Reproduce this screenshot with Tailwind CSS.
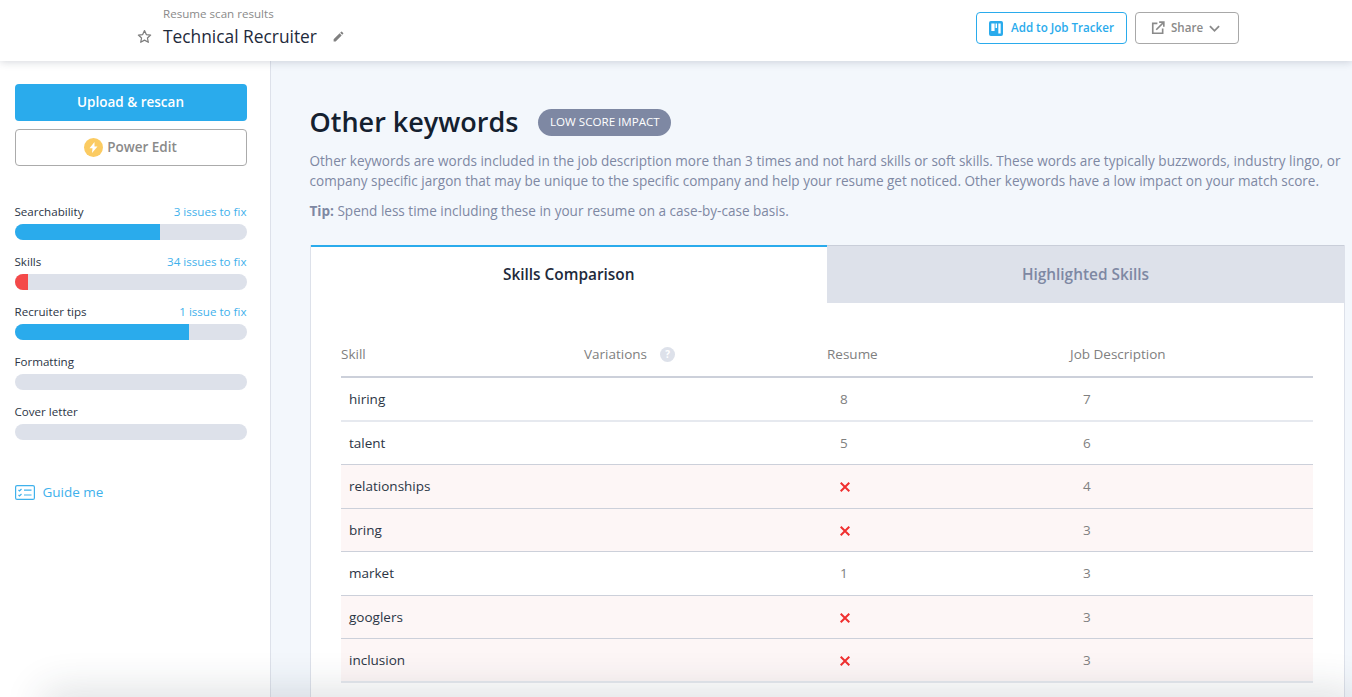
<!DOCTYPE html>
<html lang="en">
<head>
  <title>Resume scan results</title>
  <script src="https://cdn.jsdelivr.net/npm/@tailwindcss/browser@4"></script>
</head>
<body class="h-screen overflow-hidden bg-white font-['Open_Sans',sans-serif] text-[#1e2a3b]">
  <div class="relative flex flex-col h-[697px] overflow-hidden">
    <!-- Header -->
    <header class="relative z-10 flex h-[61px] shrink-0 items-center bg-white pb-[5px] shadow-[0_1px_8px_rgba(60,70,90,0.22)]">
      <div class="flex w-[976px] shrink-0 pl-[137px]">
        <svg class="mt-[22px] h-[15px] w-[15px] text-[#7d7d7d]" viewBox="0 0 24 24" fill="none" stroke="currentColor" stroke-width="2" stroke-linejoin="round"><path d="M12 2.5l2.9 6.4 6.9.8-5.1 4.7 1.4 6.9-6.1-3.5-6.1 3.5 1.4-6.9-5.1-4.7 6.9-.8z"/></svg>
        <div class="ml-[11px]">
          <p class="-mt-[1px] text-[11.6px] leading-[16px] text-[#8a8a8a]">Resume scan results</p>
          <div class="mt-[1px] flex items-center">
            <h1 class="text-[17.35px] leading-[26px] text-[#1e2a3b]">Technical Recruiter</h1>
            <svg class="ml-[15px] h-[13px] w-[13px] text-[#808080]" viewBox="0 0 24 24" fill="currentColor"><path d="M3 17.25V21h3.75L17.81 9.94l-3.75-3.75L3 17.25zM20.71 7.04a1 1 0 0 0 0-1.41l-2.34-2.34a1 1 0 0 0-1.41 0l-1.83 1.83 3.75 3.75 1.83-1.83z"/></svg>
          </div>
        </div>
      </div>
      <button class="flex h-[32px] w-[151px] items-center rounded-[4px] border border-[#2aabec] pl-[12px] text-[11.6px] font-semibold text-[#2aabec]">
        <svg class="mr-[8px] h-[15px] w-[14px]" viewBox="0 0 15 15" preserveAspectRatio="none"><rect width="15" height="15" rx="2" fill="#2aabec"/><rect x="2.5" y="2.5" width="3.5" height="7.5" fill="#fff"/><rect x="7" y="2.5" width="1.6" height="4.5" fill="#fff"/><rect x="10" y="2.5" width="2.5" height="10" fill="#fff"/></svg>
        Add to Job Tracker
      </button>
      <button class="ml-2 flex h-[32px] w-[104px] items-center rounded-[4px] border border-[#a8a8a8] pl-[15px] text-[11.6px] font-semibold text-[#8a8a8a]">
        <svg class="mr-[6px] h-[14px] w-[14px]" viewBox="0 0 24 24" fill="none" stroke="currentColor" stroke-width="2.8"><path d="M11 4H3v17h17v-8"/><path d="M9 15L22 2M14 2h8v8"/></svg>
        Share
        <svg class="ml-[6px] h-[9px] w-[11px]" viewBox="0 0 12 9" fill="none" stroke="currentColor" stroke-width="2"><path d="M1 2l5 5 5-5"/></svg>
      </button>
    </header>

    <div class="flex min-h-0 flex-1">
      <!-- Sidebar -->
      <aside class="w-[271px] shrink-0 border-r border-[#dde1ea] bg-white pl-[14.5px] pt-[23px]">
        <div class="w-[232px]">
          <button class="flex h-[37px] w-full items-center justify-center rounded-[4px] bg-[#2aabec] pb-[1px] text-[13.5px] font-semibold text-white">Upload &amp; rescan</button>
          <button class="mt-2 flex h-[37px] w-full items-center justify-center rounded-[4px] border border-[#ababab] pb-[1px] text-[13.5px] font-semibold text-[#8a8a8a]">
            <span class="mr-[4px] flex h-[19px] w-[19px] items-center justify-center rounded-full bg-[#fbcb62]">
              <svg class="h-[11px] w-[9px]" viewBox="0 0 9 11" fill="#fff"><path d="M5.5 0L0.5 6.3h3L3 11l5.5-6.5h-3z"/></svg>
            </span>
            Power Edit
          </button>

          <div class="mt-[36px] flex flex-col gap-[12px]">
            <div>
              <div class="flex h-[20px] items-center justify-between text-[11.6px]"><span class="text-[#2b3545]">Searchability</span><span class="text-[#3fb1ec]">3 issues to fix</span></div>
              <div class="mt-[2px] h-[16px] overflow-hidden rounded-full bg-[#dde1ea]"><div class="h-full w-[145px] bg-[#2aabec]"></div></div>
            </div>
            <div>
              <div class="flex h-[20px] items-center justify-between text-[11.6px]"><span class="text-[#2b3545]">Skills</span><span class="text-[#3fb1ec]">34 issues to fix</span></div>
              <div class="mt-[2px] h-[16px] overflow-hidden rounded-full bg-[#dde1ea]"><div class="h-full w-[13px] bg-[#f44949]"></div></div>
            </div>
            <div>
              <div class="flex h-[20px] items-center justify-between text-[11.6px]"><span class="text-[#2b3545]">Recruiter tips</span><span class="text-[#3fb1ec]">1 issue to fix</span></div>
              <div class="mt-[2px] h-[16px] overflow-hidden rounded-full bg-[#dde1ea]"><div class="h-full w-[174px] bg-[#2aabec]"></div></div>
            </div>
            <div>
              <div class="flex h-[20px] items-center text-[11.6px] text-[#2b3545]">Formatting</div>
              <div class="mt-[2px] h-[16px] rounded-full bg-[#dde1ea]"></div>
            </div>
            <div>
              <div class="flex h-[20px] items-center text-[11.6px] text-[#2b3545]">Cover letter</div>
              <div class="mt-[2px] h-[16px] rounded-full bg-[#dde1ea]"></div>
            </div>
          </div>

          <div class="mt-[42px] flex items-center text-[13.5px] text-[#3fb1ec]">
            <svg class="mr-[8px] h-[15px] w-[20px]" viewBox="0 0 20 15" fill="none" stroke="currentColor" stroke-width="1.2"><rect x="0.6" y="0.6" width="18.8" height="13.8" rx="1.5"/><path d="M3.5 5l1 1 2-2M3.5 10l1 1 2-2M9 5.2h7.5M9 10h7.5"/></svg>
            Guide me
          </div>
        </div>
      </aside>

      <!-- Main Content -->
      <main class="min-w-0 flex-1 overflow-hidden bg-[#f3f7fc] pl-[38.5px] pr-[7px] pt-[42px]">
        <div class="flex h-[38px] items-center">
          <h2 class="text-[27px] font-semibold leading-[38px] text-[#14202f]">Other keywords</h2>
          <span class="ml-[20px] flex h-[27px] w-[133px] items-center justify-center rounded-full bg-[#7e88a3] text-[11.6px] text-white">LOW SCORE IMPACT</span>
        </div>
        <p class="mt-[10px] w-[1035px] text-[13.55px] leading-[20px] text-[#7e88a3]">Other keywords are words included in the job description more than 3 times and not hard skills or soft skills. These words are typically buzzwords, industry lingo, or company specific jargon that may be unique to the specific company and help your resume get noticed. Other keywords have a low impact on your match score.</p>
        <p class="mt-[10px] text-[13.55px] leading-[20px] text-[#7e88a3]"><b class="font-bold">Tip:</b> Spend less time including these in your resume on a case-by-case basis.</p>

        <!-- Card -->
        <div class="mt-[24px] h-[460px] border-x border-[#dde1ea] bg-white">
          <div class="flex h-[58px]">
            <div class="flex w-[516.5px] items-center justify-center border-t-2 border-[#2aabec] text-[15.4px] font-semibold text-[#1e2a3b]">Skills Comparison</div>
            <div class="flex flex-1 items-center justify-center border-t border-[#c9ced9] bg-[#dde1ea] text-[15.4px] font-semibold text-[#7e88a3]">Highlighted Skills</div>
          </div>

          <div class="ml-[30.5px] mt-[31px] w-[972px] text-[13.5px]">
            <div class="grid h-[44px] grid-cols-4 items-center border-b-2 border-[#ccd0da] pb-[1px] text-[#808080]">
              <span>Skill</span>
              <span class="flex items-center">Variations<span class="ml-[13px] flex h-[15px] w-[15px] items-center justify-center rounded-full bg-[#dde1ea] text-[10px] font-bold text-white">?</span></span>
              <span>Resume</span>
              <span>Job Description</span>
            </div>

            <div class="grid h-[43.5px] grid-cols-4 items-center border-b-2 border-[#e6e9ef]">
              <span class="pl-2 text-[#2b3545]">hiring</span><span></span><span class="pl-[13px] text-[#808080]">8</span><span class="pl-[13px] text-[#808080]">7</span>
            </div>
            <div class="grid h-[43.5px] grid-cols-4 items-center border-b border-[#ccd0da]">
              <span class="pl-2 text-[#2b3545]">talent</span><span></span><span class="pl-[13px] text-[#808080]">5</span><span class="pl-[13px] text-[#808080]">6</span>
            </div>
            <div class="grid h-[43.5px] grid-cols-4 items-center border-b border-[#ccd0da] bg-[#fdf6f6]">
              <span class="pl-2 text-[#2b3545]">relationships</span><span></span>
              <span class="pl-[13px] pt-[2px]"><svg class="h-[10px] w-[10px]" viewBox="0 0 10 10" stroke="#f02f2f" stroke-width="2"><path d="M0.7 0.7l8.6 8.6M9.3 0.7l-8.6 8.6"/></svg></span>
              <span class="pl-[13px] text-[#808080]">4</span>
            </div>
            <div class="grid h-[43.5px] grid-cols-4 items-center border-b border-[#ccd0da] bg-[#fdf6f6]">
              <span class="pl-2 text-[#2b3545]">bring</span><span></span>
              <span class="pl-[13px] pt-[2px]"><svg class="h-[10px] w-[10px]" viewBox="0 0 10 10" stroke="#f02f2f" stroke-width="2"><path d="M0.7 0.7l8.6 8.6M9.3 0.7l-8.6 8.6"/></svg></span>
              <span class="pl-[13px] text-[#808080]">3</span>
            </div>
            <div class="grid h-[43.5px] grid-cols-4 items-center border-b border-[#ccd0da]">
              <span class="pl-2 text-[#2b3545]">market</span><span></span><span class="pl-[13px] text-[#808080]">1</span><span class="pl-[13px] text-[#808080]">3</span>
            </div>
            <div class="grid h-[43.5px] grid-cols-4 items-center border-b border-[#ccd0da] bg-[#fdf6f6]">
              <span class="pl-2 text-[#2b3545]">googlers</span><span></span>
              <span class="pl-[13px] pt-[2px]"><svg class="h-[10px] w-[10px]" viewBox="0 0 10 10" stroke="#f02f2f" stroke-width="2"><path d="M0.7 0.7l8.6 8.6M9.3 0.7l-8.6 8.6"/></svg></span>
              <span class="pl-[13px] text-[#808080]">3</span>
            </div>
            <div class="grid h-[43.5px] grid-cols-4 items-center border-b-2 border-[#e6e9ef] bg-[#fdf6f6]">
              <span class="pl-2 text-[#2b3545]">inclusion</span><span></span>
              <span class="pl-[13px] pt-[2px]"><svg class="h-[10px] w-[10px]" viewBox="0 0 10 10" stroke="#f02f2f" stroke-width="2"><path d="M0.7 0.7l8.6 8.6M9.3 0.7l-8.6 8.6"/></svg></span>
              <span class="pl-[13px] text-[#808080]">3</span>
            </div>
          </div>
        </div>
      </main>
    </div>

    <!-- Shadow along the bottom edge -->
    <div class="pointer-events-none absolute bottom-[-30px] left-[50px] right-0 h-[30px] shadow-[0_0_40px_6px_rgba(40,50,60,0.16)]"></div>
  </div>
</body>
</html>
